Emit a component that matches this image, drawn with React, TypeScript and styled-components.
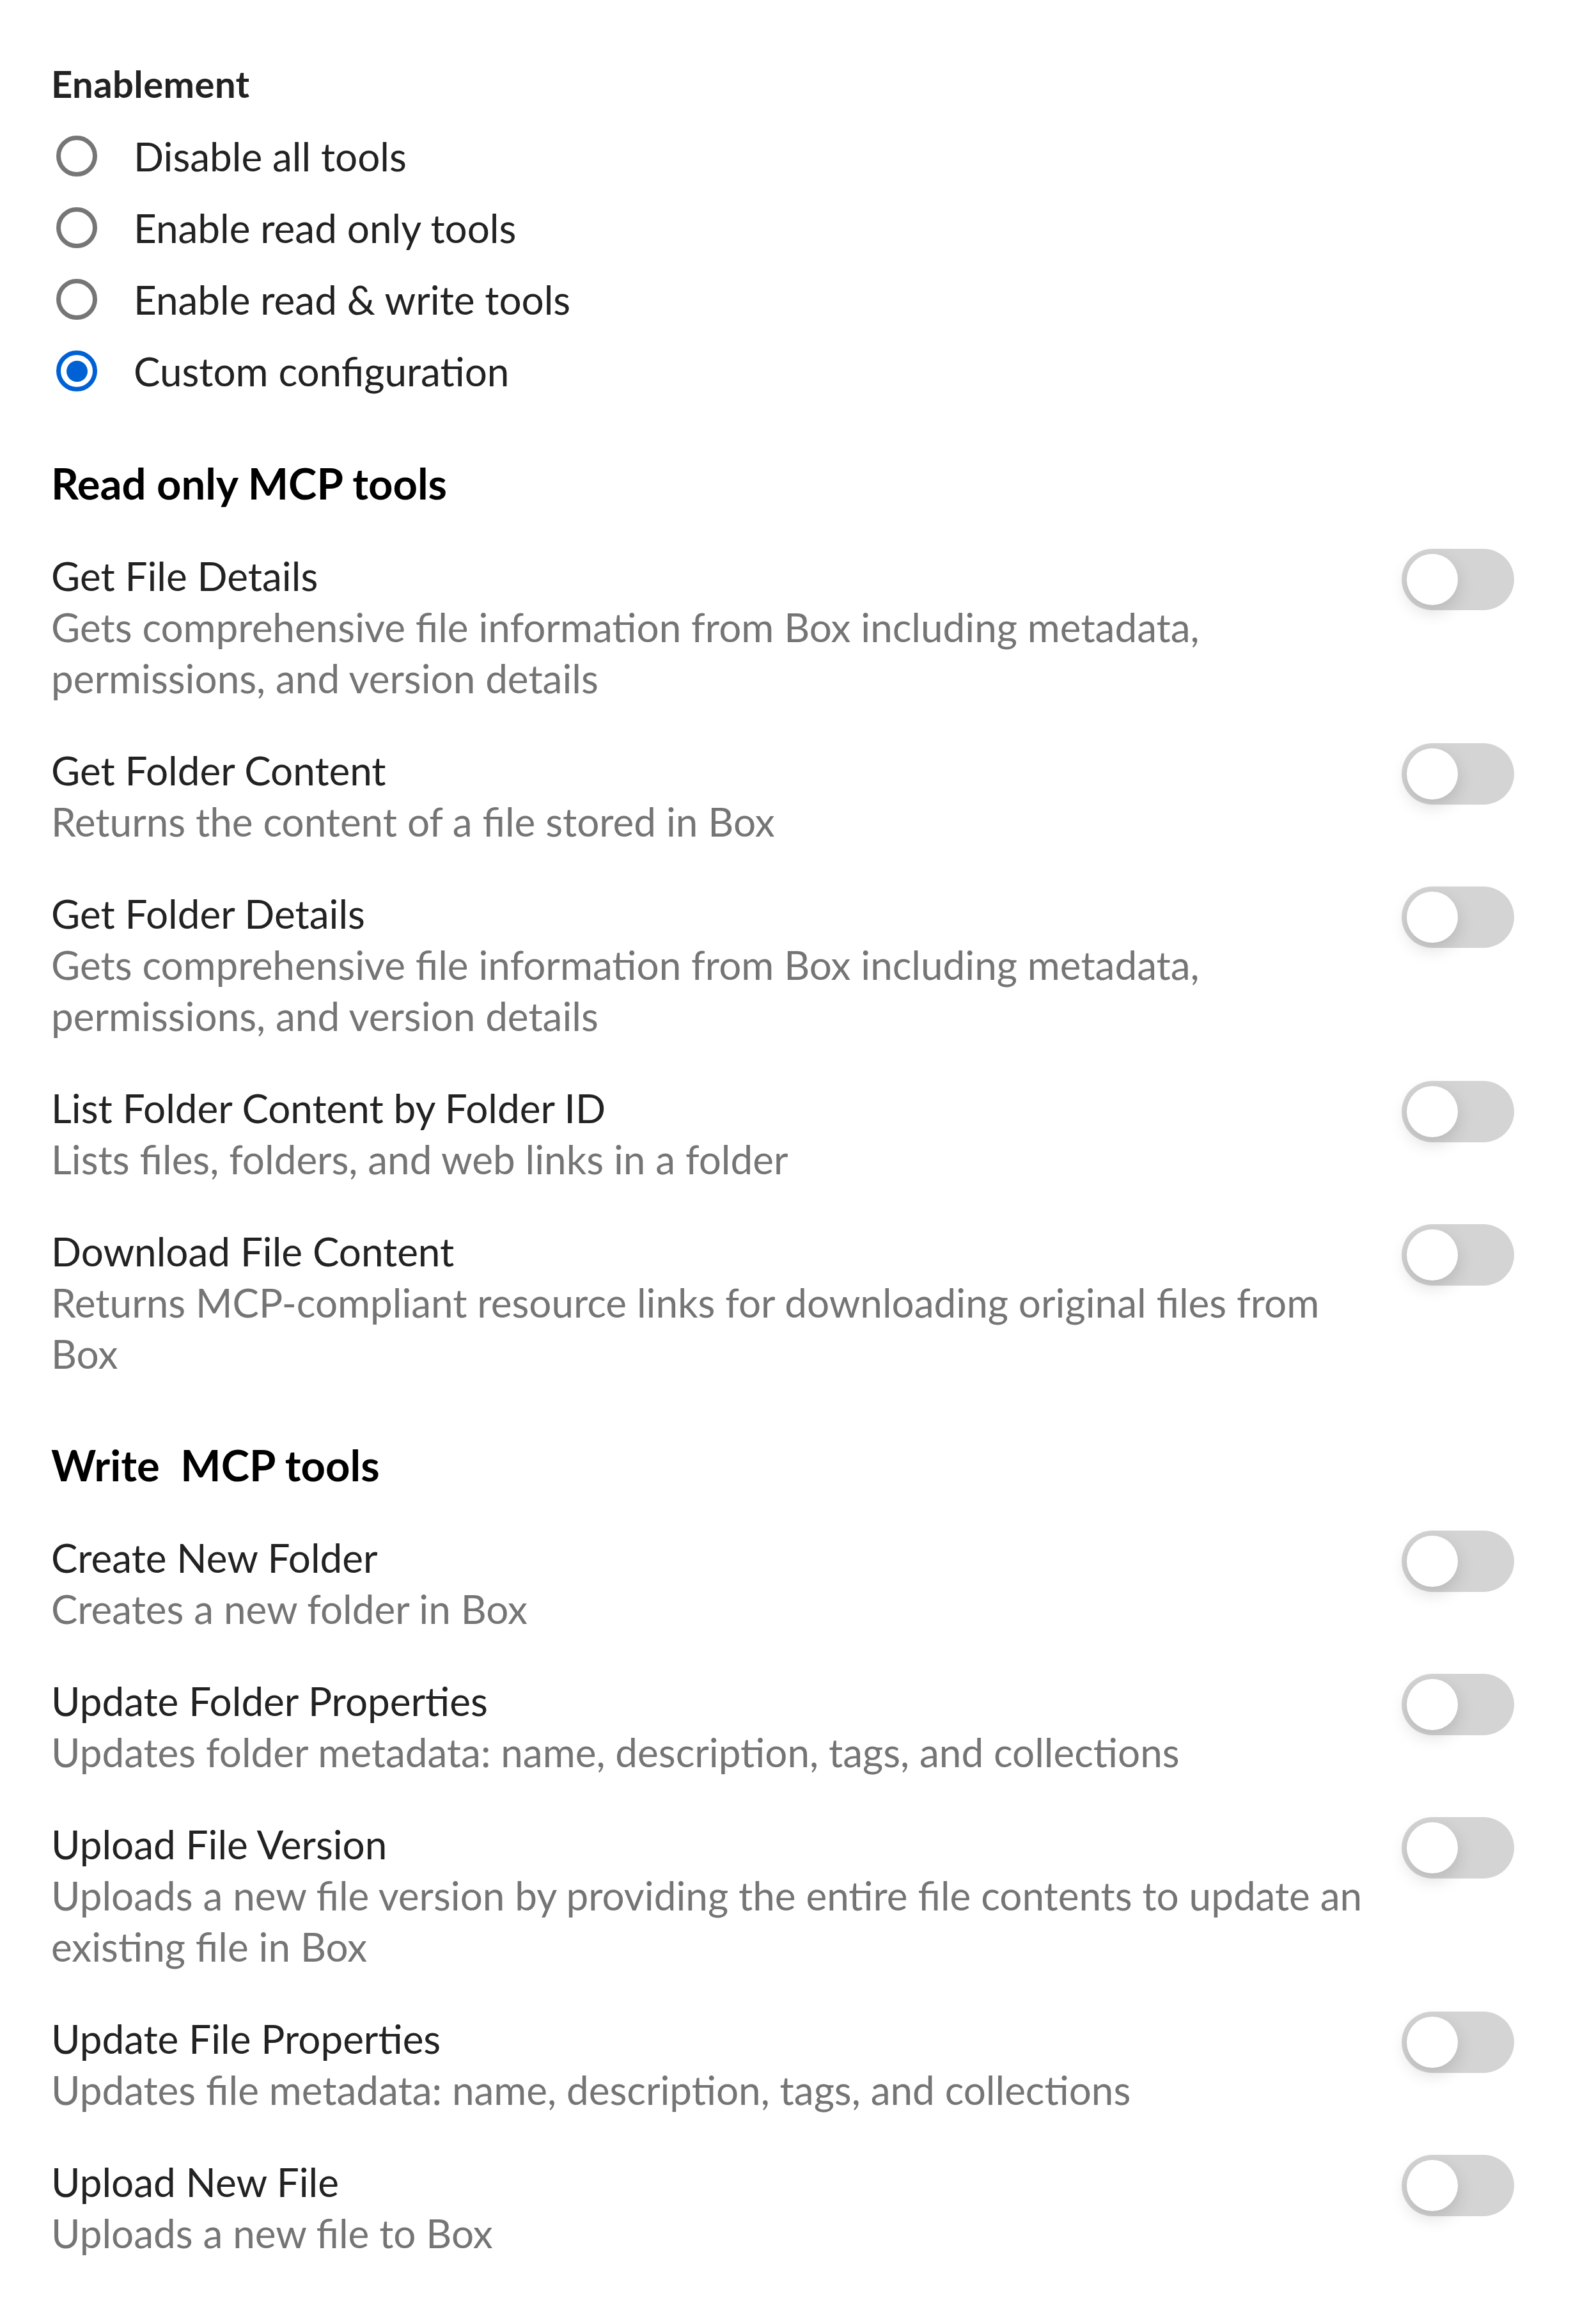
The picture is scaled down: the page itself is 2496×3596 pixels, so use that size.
import React, { useState } from "react";
import styled, { createGlobalStyle } from "styled-components";

const GlobalStyle = createGlobalStyle`
  html, body {
    margin: 0;
    padding: 0;
    background: #ffffff;
  }
  body {
    font-family: Lato, "Noto Sans", sans-serif;
    -webkit-font-smoothing: antialiased;
  }
  * {
    box-sizing: border-box;
  }
`;

const Page = styled.div`
  width: 2496px;
  min-height: 3596px;
  padding: 97px 128px 0 80px;
  display: flex;
  flex-direction: column;
`;

const GroupTitle = styled.h3`
  margin: 0;
  font-size: 58px;
  line-height: 67px;
  font-weight: 700;
  letter-spacing: 0.4px;
  color: #222222;
`;

const RadioList = styled.div`
  margin-top: 24px;
  display: flex;
  flex-direction: column;
`;

const RadioRow = styled.label`
  height: 112px;
  display: flex;
  align-items: center;
  gap: 57px;
  padding-left: 8px;
  cursor: pointer;
`;

const RadioCircle = styled.span<{ $checked: boolean }>`
  width: 64px;
  height: 64px;
  flex-shrink: 0;
  border-radius: 50%;
  border: 7px solid ${(p) => (p.$checked ? "#0061d5" : "#767676")};
  display: flex;
  align-items: center;
  justify-content: center;

  &::after {
    content: "";
    width: 33px;
    height: 33px;
    border-radius: 50%;
    background: #0061d5;
    display: ${(p) => (p.$checked ? "block" : "none")};
  }
`;

const RadioText = styled.span`
  font-size: 62px;
  line-height: 80px;
  color: #222222;
`;

const Section = styled.section<{ $top: number }>`
  margin-top: ${(p) => p.$top}px;
  display: flex;
  flex-direction: column;
  gap: 64px;
`;

const SectionTitle = styled.h2`
  margin: 0;
  font-size: 67px;
  line-height: 82px;
  font-weight: 700;
  color: #000000;
  white-space: pre;
`;

const ToolRow = styled.div`
  display: flex;
  align-items: flex-start;
  justify-content: space-between;
  gap: 24px;
`;

const ToolText = styled.div`
  flex: 1;
  display: flex;
  flex-direction: column;
`;

const ToolName = styled.div`
  font-size: 62px;
  line-height: 80px;
  color: #222222;
`;

const ToolDesc = styled.div`
  font-size: 62px;
  line-height: 80px;
  color: #757575;
`;

const Track = styled.button<{ $on: boolean }>`
  width: 176px;
  height: 96px;
  flex-shrink: 0;
  margin-top: -2px;
  padding: 8px;
  border: none;
  border-radius: 48px;
  background: ${(p) => (p.$on ? "#0061d5" : "#d4d4d4")};
  display: flex;
  justify-content: ${(p) => (p.$on ? "flex-end" : "flex-start")};
  cursor: pointer;
`;

const Knob = styled.span`
  width: 80px;
  height: 80px;
  border-radius: 50%;
  background: #ffffff;
  box-shadow: 0 10px 28px rgba(0, 0, 0, 0.14);
`;

type Tool = { name: string; desc: string };

const readTools: Tool[] = [
  {
    name: "Get File Details",
    desc: "Gets comprehensive file information from Box including metadata, permissions, and version details",
  },
  { name: "Get Folder Content", desc: "Returns the content of a file stored in Box" },
  {
    name: "Get Folder Details",
    desc: "Gets comprehensive file information from Box including metadata, permissions, and version details",
  },
  { name: "List Folder Content by Folder ID", desc: "Lists files, folders, and web links in a folder" },
  {
    name: "Download File Content",
    desc: "Returns MCP-compliant resource links for downloading original files from Box",
  },
];

const writeTools: Tool[] = [
  { name: "Create New Folder", desc: "Creates a new folder in Box" },
  {
    name: "Update Folder Properties",
    desc: "Updates folder metadata: name, description, tags, and collections",
  },
  {
    name: "Upload File Version",
    desc: "Uploads a new file version by providing the entire file contents to update an existing file in Box",
  },
  {
    name: "Update File Properties",
    desc: "Updates file metadata: name, description, tags, and collections",
  },
  { name: "Upload New File", desc: "Uploads a new file to Box" },
];

const modes = [
  "Disable all tools",
  "Enable read only tools",
  "Enable read & write tools",
  "Custom configuration",
];

const Toggle = () => {
  const [on, setOn] = useState(false);
  return (
    <Track $on={on} onClick={() => setOn(!on)} aria-pressed={on}>
      <Knob />
    </Track>
  );
};

const ToolItem = ({ tool }: { tool: Tool }) => (
  <ToolRow>
    <ToolText>
      <ToolName>{tool.name}</ToolName>
      <ToolDesc>{tool.desc}</ToolDesc>
    </ToolText>
    <Toggle />
  </ToolRow>
);

const App = () => {
  const [mode, setMode] = useState(3);
  return (
    <>
      <GlobalStyle />
      <Page>
        <GroupTitle>Enablement</GroupTitle>
        <RadioList>
          {modes.map((m, i) => (
            <RadioRow key={m} onClick={() => setMode(i)}>
              <RadioCircle $checked={mode === i} />
              <RadioText>{m}</RadioText>
            </RadioRow>
          ))}
        </RadioList>
        <Section $top={78}>
          <SectionTitle>Read only MCP tools</SectionTitle>
          {readTools.map((t) => (
            <ToolItem key={t.name} tool={t} />
          ))}
        </Section>
        <Section $top={93}>
          <SectionTitle>Write  MCP tools</SectionTitle>
          {writeTools.map((t) => (
            <ToolItem key={t.name} tool={t} />
          ))}
        </Section>
      </Page>
    </>
  );
};

export default App;
